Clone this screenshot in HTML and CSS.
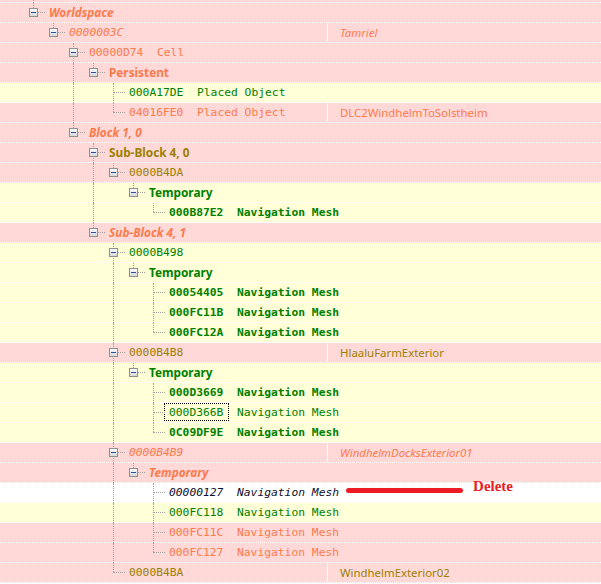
FILE: index.html
```html
<!DOCTYPE html>
<html lang="en">
<head>
  <meta charset="UTF-8" />
  <title>Record Tree</title>
  <link rel="stylesheet" href="styles.css">
</head>
<body>
  <div class="list">
    <div class="row">
      <div class="tree wide"><span class="g v"></span></div>
    </div>

    <div class="row">
      <div class="tree wide">
        <span class="n last"><span class="box"></span></span>
        <span class="label sans bold italic orange">Worldspace</span>
      </div>
    </div>
    <div class="row">
      <div class="tree">
        <span class="g"></span>
        <span class="n last"><span class="box"></span></span>
        <span class="label mono italic orange">0000003C</span>
      </div>
      <div class="val italic orange">Tamriel</div>
    </div>
    <div class="row">
      <div class="tree wide">
        <span class="g"></span><span class="g"></span>
        <span class="n"><span class="box"></span></span>
        <span class="label mono orange">00000D74  Cell</span>
      </div>
    </div>
    <div class="row">
      <div class="tree wide">
        <span class="g"></span><span class="g"></span><span class="g v"></span>
        <span class="n last"><span class="box"></span></span>
        <span class="label sans bold orange">Persistent</span>
      </div>
    </div>
    <div class="row yel">
      <div class="tree wide">
        <span class="g"></span><span class="g"></span><span class="g v"></span><span class="g"></span>
        <span class="n"></span>
        <span class="label mono green">000A17DE  Placed Object</span>
      </div>
    </div>
    <div class="row">
      <div class="tree">
        <span class="g"></span><span class="g"></span><span class="g v"></span><span class="g"></span>
        <span class="n last"></span>
        <span class="label mono orange">04016FE0  Placed Object</span>
      </div>
      <div class="val orange">DLC2WindhelmToSolstheim</div>
    </div>
    <div class="row">
      <div class="tree wide">
        <span class="g"></span><span class="g"></span>
        <span class="n last"><span class="box"></span></span>
        <span class="label sans bold italic orange">Block 1, 0</span>
      </div>
    </div>
    <div class="row">
      <div class="tree wide">
        <span class="g"></span><span class="g"></span><span class="g"></span>
        <span class="n"><span class="box"></span></span>
        <span class="label sans bold olive">Sub-Block 4, 0</span>
      </div>
    </div>
    <div class="row">
      <div class="tree wide">
        <span class="g"></span><span class="g"></span><span class="g"></span><span class="g v"></span>
        <span class="n last"><span class="box"></span></span>
        <span class="label mono olive">0000B4DA</span>
      </div>
    </div>
    <div class="row yel">
      <div class="tree wide">
        <span class="g"></span><span class="g"></span><span class="g"></span><span class="g v"></span><span class="g"></span>
        <span class="n last"><span class="box"></span></span>
        <span class="label sans bold green">Temporary</span>
      </div>
    </div>
    <div class="row yel">
      <div class="tree wide">
        <span class="g"></span><span class="g"></span><span class="g"></span><span class="g v"></span><span class="g"></span><span class="g"></span>
        <span class="n last"></span>
        <span class="label mono bold green">000B87E2  Navigation Mesh</span>
      </div>
    </div>
    <div class="row">
      <div class="tree wide">
        <span class="g"></span><span class="g"></span><span class="g"></span>
        <span class="n last"><span class="box"></span></span>
        <span class="label sans bold italic orange">Sub-Block 4, 1</span>
      </div>
    </div>

    <div class="row yel">
      <div class="tree wide">
        <span class="g"></span><span class="g"></span><span class="g"></span><span class="g"></span>
        <span class="n"><span class="box"></span></span>
        <span class="label mono green">0000B498</span>
      </div>
    </div>
    <div class="row yel">
      <div class="tree wide">
        <span class="g"></span><span class="g"></span><span class="g"></span><span class="g"></span><span class="g v"></span>
        <span class="n last"><span class="box"></span></span>
        <span class="label sans bold green">Temporary</span>
      </div>
    </div>
    <div class="row yel">
      <div class="tree wide">
        <span class="g"></span><span class="g"></span><span class="g"></span><span class="g"></span><span class="g v"></span><span class="g"></span>
        <span class="n"></span>
        <span class="label mono bold green">00054405  Navigation Mesh</span>
      </div>
    </div>
    <div class="row yel">
      <div class="tree wide">
        <span class="g"></span><span class="g"></span><span class="g"></span><span class="g"></span><span class="g v"></span><span class="g"></span>
        <span class="n"></span>
        <span class="label mono bold green">000FC11B  Navigation Mesh</span>
      </div>
    </div>
    <div class="row yel">
      <div class="tree wide">
        <span class="g"></span><span class="g"></span><span class="g"></span><span class="g"></span><span class="g v"></span><span class="g"></span>
        <span class="n last"></span>
        <span class="label mono bold green">000FC12A  Navigation Mesh</span>
      </div>
    </div>

    <div class="row">
      <div class="tree">
        <span class="g"></span><span class="g"></span><span class="g"></span><span class="g"></span>
        <span class="n"><span class="box"></span></span>
        <span class="label mono olive">0000B4B8</span>
      </div>
      <div class="val olive">HlaaluFarmExterior</div>
    </div>
    <div class="row yel">
      <div class="tree wide">
        <span class="g"></span><span class="g"></span><span class="g"></span><span class="g"></span><span class="g v"></span>
        <span class="n last"><span class="box"></span></span>
        <span class="label sans bold green">Temporary</span>
      </div>
    </div>
    <div class="row yel">
      <div class="tree wide">
        <span class="g"></span><span class="g"></span><span class="g"></span><span class="g"></span><span class="g v"></span><span class="g"></span>
        <span class="n"></span>
        <span class="label mono bold green">000D3669  Navigation Mesh</span>
      </div>
    </div>
    <div class="row yel">
      <div class="tree wide">
        <span class="g"></span><span class="g"></span><span class="g"></span><span class="g"></span><span class="g v"></span><span class="g"></span>
        <span class="n"></span>
        <span class="label mono green"><span class="focus">000D366B</span>  Navigation Mesh</span>
      </div>
    </div>
    <div class="row yel">
      <div class="tree wide">
        <span class="g"></span><span class="g"></span><span class="g"></span><span class="g"></span><span class="g v"></span><span class="g"></span>
        <span class="n last"></span>
        <span class="label mono bold green">0C09DF9E  Navigation Mesh</span>
      </div>
    </div>

    <div class="row">
      <div class="tree">
        <span class="g"></span><span class="g"></span><span class="g"></span><span class="g"></span>
        <span class="n"><span class="box"></span></span>
        <span class="label mono italic orange">0000B4B9</span>
      </div>
      <div class="val italic orange">WindhelmDocksExterior01</div>
    </div>
    <div class="row">
      <div class="tree wide">
        <span class="g"></span><span class="g"></span><span class="g"></span><span class="g"></span><span class="g v"></span>
        <span class="n last"><span class="box"></span></span>
        <span class="label sans bold italic orange">Temporary</span>
      </div>
    </div>
    <div class="row white">
      <div class="tree wide">
        <span class="g"></span><span class="g"></span><span class="g"></span><span class="g"></span><span class="g v"></span><span class="g"></span>
        <span class="n"></span>
        <span class="label mono italic dark">00000127  Navigation Mesh</span>
        <span class="strike"></span>
        <span class="note">Delete</span>
      </div>
    </div>
    <div class="row yel">
      <div class="tree wide">
        <span class="g"></span><span class="g"></span><span class="g"></span><span class="g"></span><span class="g v"></span><span class="g"></span>
        <span class="n"></span>
        <span class="label mono green">000FC118  Navigation Mesh</span>
      </div>
    </div>
    <div class="row">
      <div class="tree wide">
        <span class="g"></span><span class="g"></span><span class="g"></span><span class="g"></span><span class="g v"></span><span class="g"></span>
        <span class="n"></span>
        <span class="label mono orange">000FC11C  Navigation Mesh</span>
      </div>
    </div>
    <div class="row">
      <div class="tree wide">
        <span class="g"></span><span class="g"></span><span class="g"></span><span class="g"></span><span class="g v"></span><span class="g"></span>
        <span class="n last"></span>
        <span class="label mono orange">000FC127  Navigation Mesh</span>
      </div>
    </div>

    <div class="row">
      <div class="tree">
        <span class="g"></span><span class="g"></span><span class="g"></span><span class="g"></span>
        <span class="n last"></span>
        <span class="label mono olive">0000B4BA</span>
      </div>
      <div class="val olive">WindhelmExterior02</div>
    </div>
  </div>
</body>
</html>
```

FILE: styles.css
```css
body {
  margin: 0;
  background: #fff;
  font-family: "Noto Sans", sans-serif;
  font-size: 12px;
  overflow: hidden;
}
.list {
  margin-top: -17px;
}
.row {
  display: flex;
  height: 20px;
  background-color: #ffd8d8;
  background-image: linear-gradient(to right, #fff 50%, transparent 50%);
  background-size: 2px 1px;
  background-repeat: repeat-x;
  background-position: 0 100%;
}
.row.yel {
  background-color: #ffffd8;
}
.row.white {
  background-color: #fff;
}
.tree {
  flex: 0 0 327px;
  display: flex;
  padding-left: 23px;
  box-sizing: border-box;
  white-space: pre;
}
.tree.wide {
  flex: 1;
}
.g, .n {
  flex: none;
  position: relative;
  width: 20px;
}
.n {
  width: 26px;
}
.g.v::before, .n::before {
  content: '';
  position: absolute;
  left: 10px;
  top: 0;
  bottom: 0;
  border-left: 1px dotted #a0a0a0;
}
.n.last::before {
  bottom: 11px;
}
.n::after {
  content: '';
  position: absolute;
  left: 10px;
  top: 9px;
  width: 12px;
  border-top: 1px dotted #a0a0a0;
}
.box {
  position: absolute;
  z-index: 1;
  left: 6px;
  top: 5px;
  width: 9px;
  height: 9px;
  box-sizing: border-box;
  border: 1px solid #8e8f8f;
  background: linear-gradient(#fdfdfd, #d8d8d8);
}
.box::after {
  content: '';
  position: absolute;
  left: 1px;
  top: 3px;
  width: 5px;
  height: 1px;
  background: #2b4ea3;
}
.label {
  flex: none;
  line-height: 19px;
  height: 19px;
}
.sans {
  font-size: 11.8px;
}
.val {
  flex: 1;
  border-left: 1px solid #fff;
  padding-left: 12px;
  font-size: 11.4px;
  line-height: 19px;
  height: 19px;
  white-space: nowrap;
}
.mono {
  font-family: "DejaVu Sans Mono", monospace;
  font-size: 11.3px;
}
.bold {
  font-weight: bold;
}
.italic {
  font-style: italic;
}
.orange {
  color: #fb7b4c;
}
.olive {
  color: #9a8000;
}
.green {
  color: #008000;
}
.dark {
  color: #101030;
}
.focus {
  outline: 1px dotted #000;
  outline-offset: 0;
  padding: 2px 5px 1px 4px;
  margin: 0 -5px 0 -4px;
}
.strike {
  flex: none;
  width: 117px;
  height: 5px;
  margin: 5px 0 0 7px;
  border-radius: 3px;
  background: #ed1c24;
}
.note {
  flex: none;
  margin-left: 10px;
  position: relative;
  top: -6px;
  font-family: "Liberation Serif", serif;
  font-weight: bold;
  font-size: 15px;
  line-height: 19px;
  color: #ed1c24;
}
```
